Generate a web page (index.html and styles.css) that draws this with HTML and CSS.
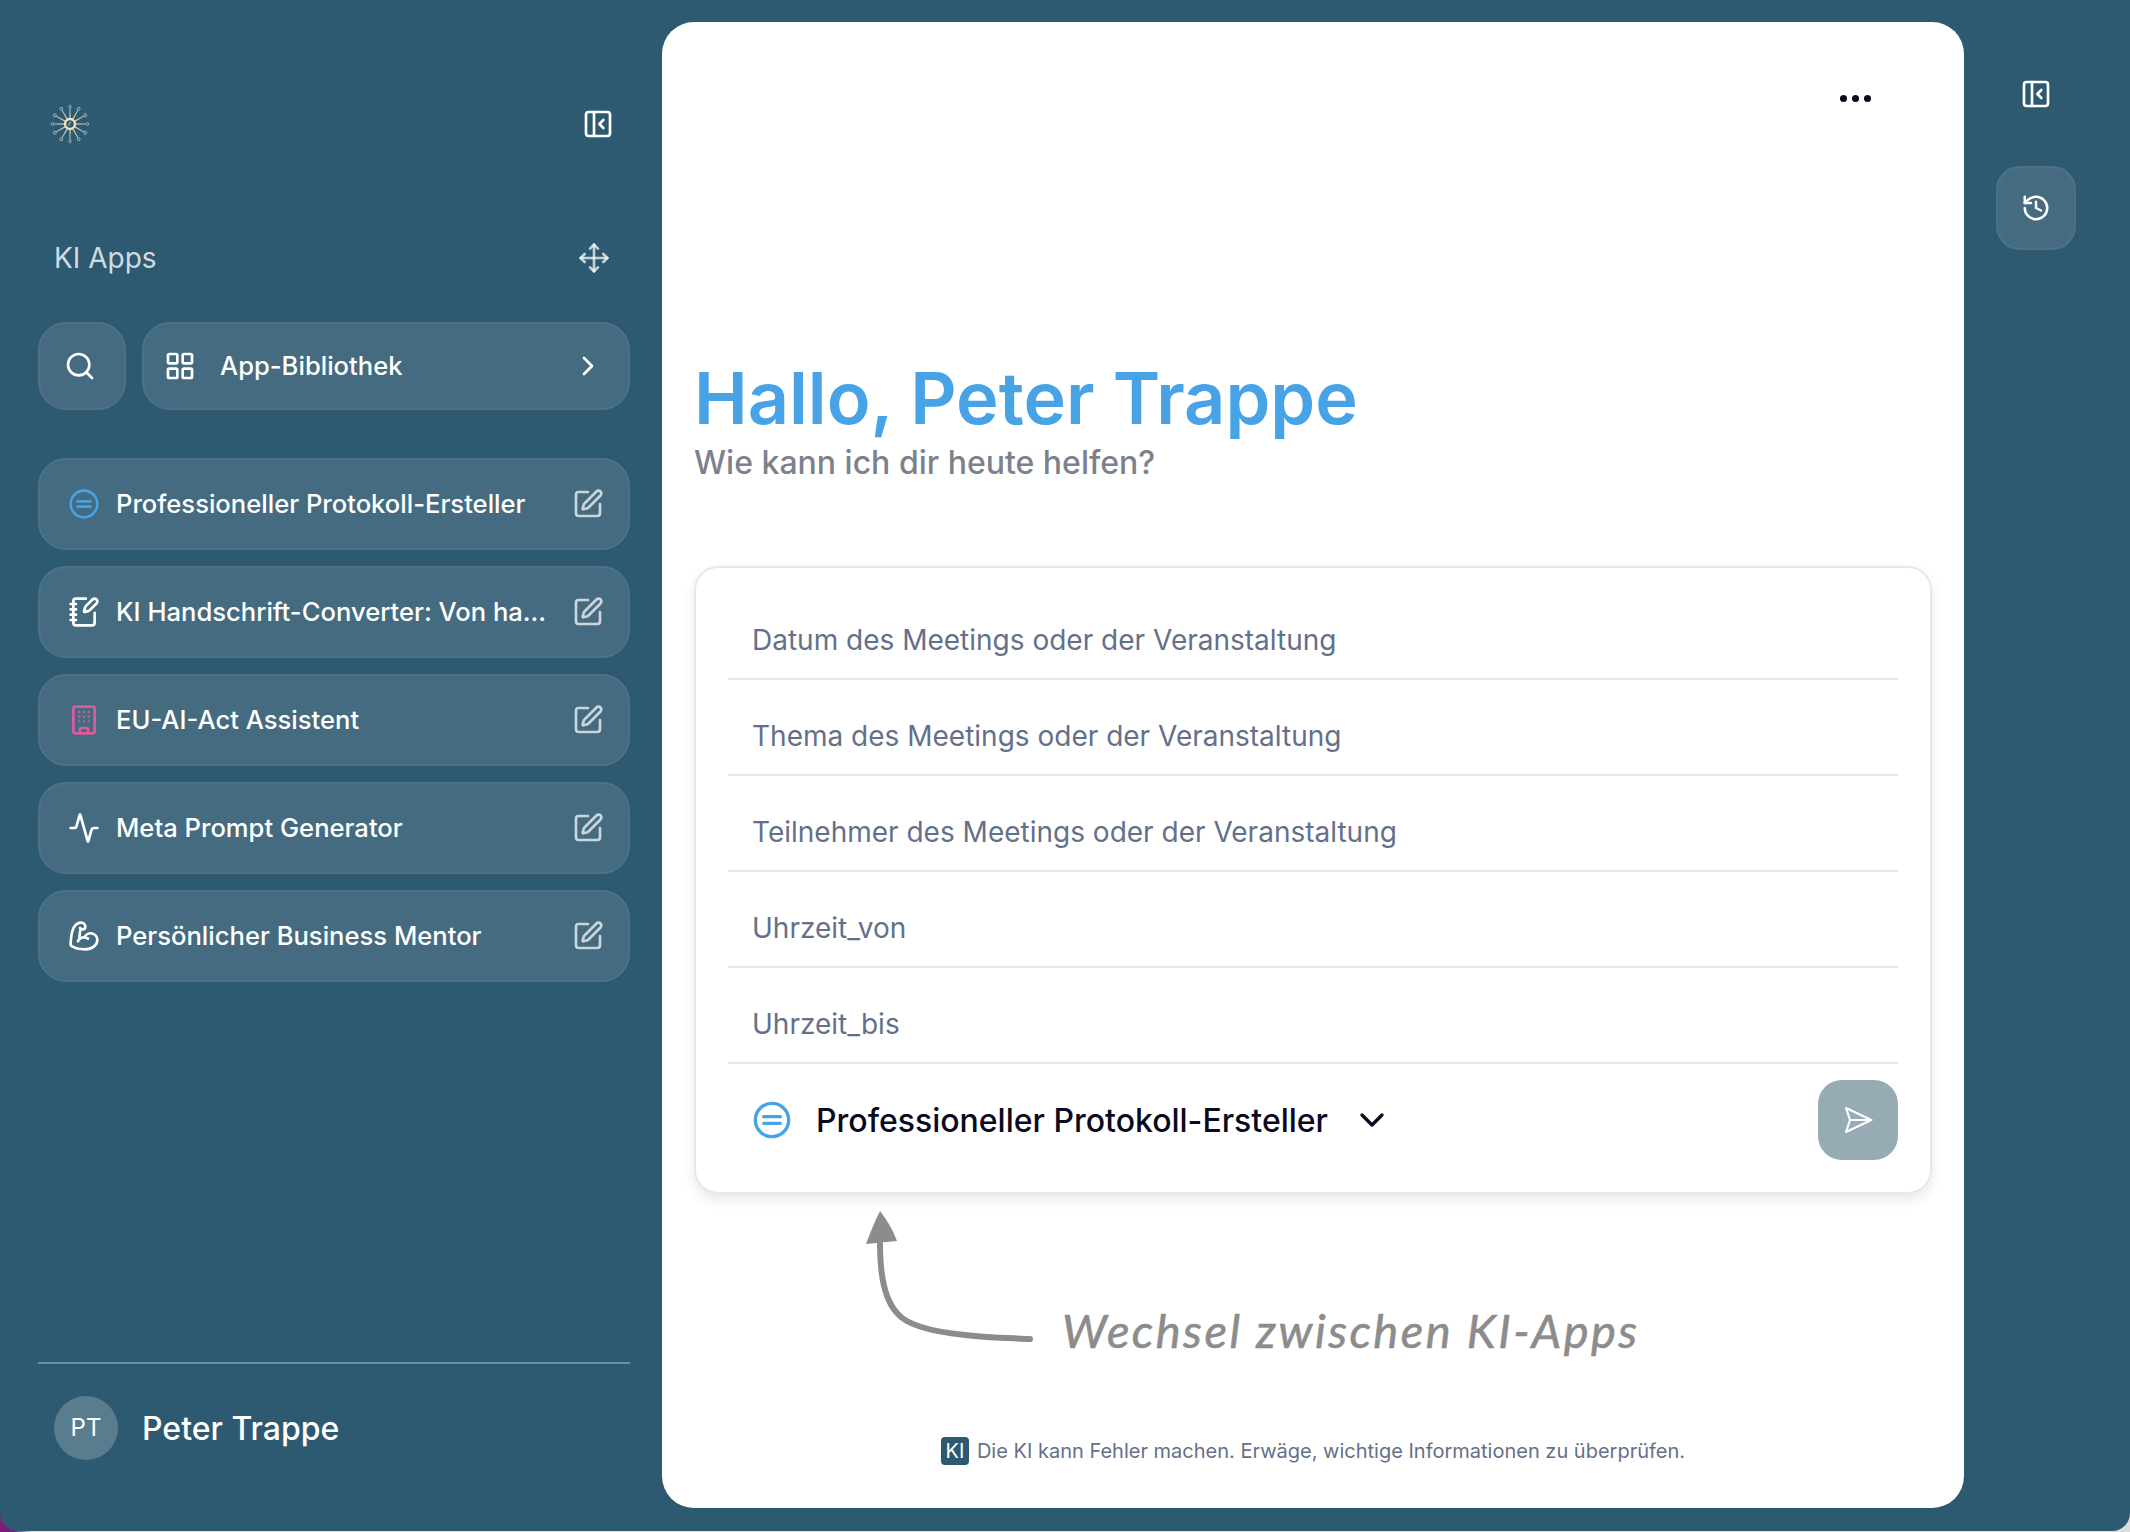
FILE: index.html
```html
<!DOCTYPE html>
<html lang="de">
<head>
<meta charset="utf-8">
<title>KI Apps</title>
<link rel="stylesheet" href="styles.css">
</head>
<body>
<svg class="defs" width="0" height="0" aria-hidden="true">
  <defs>
    <symbol id="i-pen" viewBox="0 0 24 24"><path d="M12 3H5a2 2 0 0 0-2 2v14a2 2 0 0 0 2 2h14a2 2 0 0 0 2-2v-7"/><path d="M18.375 2.625a1 1 0 0 1 3 3l-9.013 9.014a2 2 0 0 1-.853.505l-2.873.84a.5.5 0 0 1-.62-.62l.84-2.873a2 2 0 0 1 .506-.852z"/></symbol>
    <symbol id="i-panel" viewBox="0 0 24 24"><rect x="3" y="3" width="18" height="18" rx="2"/><path d="M9 3v18"/><path d="m16 15-3-3 3-3"/></symbol>
    <symbol id="i-equal" viewBox="0 0 24 24"><circle cx="12" cy="12" r="10"/><path d="M7 10h10"/><path d="M7 14h10"/></symbol>
    <linearGradient id="spoke-fade" gradientUnits="userSpaceOnUse" x1="24" y1="18" x2="24" y2="5"><stop offset="0" stop-color="#f3e3bd"/><stop offset="1" stop-color="#86a0ac"/></linearGradient>
    <g id="spoke"><path d="M24 18V6.500" stroke="url(#spoke-fade)" stroke-width="1.200" fill="none"/><circle cx="24" cy="5" r="1.500" fill="none" stroke="#9fb3bc" stroke-width="1"/></g>
  </defs>
</svg>
<div class="app">
  <aside class="sidebar">
    <div class="side-head">
      <svg class="logo" viewBox="0 0 48 48">
        <use href="#spoke"/>
        <use href="#spoke" transform="rotate(30 24 24)"/>
        <use href="#spoke" transform="rotate(60 24 24)"/>
        <use href="#spoke" transform="rotate(90 24 24)"/>
        <use href="#spoke" transform="rotate(120 24 24)"/>
        <use href="#spoke" transform="rotate(150 24 24)"/>
        <use href="#spoke" transform="rotate(180 24 24)"/>
        <use href="#spoke" transform="rotate(210 24 24)"/>
        <use href="#spoke" transform="rotate(240 24 24)"/>
        <use href="#spoke" transform="rotate(270 24 24)"/>
        <use href="#spoke" transform="rotate(300 24 24)"/>
        <use href="#spoke" transform="rotate(330 24 24)"/>
        <circle cx="24" cy="24" r="5.400" fill="#2d5a71" stroke="#f3e3bd" stroke-width="2.600"/>
        <path d="M23 25.500a2.600 2.600 0 0 1 2-3.600" fill="none" stroke="#f3e3bd" stroke-width="1"/>
      </svg>
      <svg class="icon collapse"><use href="#i-panel"/></svg>
    </div>
    <div class="section-title">
      <span>KI Apps</span>
      <svg class="icon dim" viewBox="0 0 24 24"><path d="M12 2v20"/><path d="m15 19-3 3-3-3"/><path d="m19 9 3 3-3 3"/><path d="M2 12h20"/><path d="m5 9-3 3 3 3"/><path d="m9 5 3-3 3 3"/></svg>
    </div>
    <div class="tools">
      <button class="tile search-btn" type="button">
        <svg class="icon" viewBox="0 0 24 24"><circle cx="11" cy="11" r="8"/><path d="m21 21-4.300-4.300"/></svg>
      </button>
      <button class="tile library-btn" type="button">
        <svg class="icon" viewBox="0 0 24 24"><rect x="3" y="3" width="7" height="7" rx="1"/><rect x="14" y="3" width="7" height="7" rx="1"/><rect x="14" y="14" width="7" height="7" rx="1"/><rect x="3" y="14" width="7" height="7" rx="1"/></svg>
        <span class="library-label">App-Bibliothek</span>
        <svg class="icon" viewBox="0 0 24 24"><path d="m9 18 6-6-6-6"/></svg>
      </button>
    </div>
    <nav class="app-list">
      <a class="tile app-row">
        <svg class="icon blue"><use href="#i-equal"/></svg>
        <span class="app-name">Professioneller Protokoll-Ersteller</span>
        <svg class="icon dim"><use href="#i-pen"/></svg>
      </a>
      <a class="tile app-row">
        <svg class="icon" viewBox="0 0 24 24"><path d="M13.400 2H6a2 2 0 0 0-2 2v16a2 2 0 0 0 2 2h12a2 2 0 0 0 2-2v-7.400"/><path d="M2 6h4"/><path d="M2 10h4"/><path d="M2 14h4"/><path d="M2 18h4"/><path d="M21.378 5.626a1 1 0 1 0-3.004-3.004l-5.010 5.012a2 2 0 0 0-.506.854l-.837 2.870a.5.5 0 0 0 .62.62l2.870-.837a2 2 0 0 0 .854-.506z"/></svg>
        <span class="app-name">KI Handschrift-Converter: Von ha...</span>
        <svg class="icon dim"><use href="#i-pen"/></svg>
      </a>
      <a class="tile app-row">
        <svg class="icon pink" viewBox="0 0 24 24"><rect x="4" y="2" width="16" height="20" rx="1.500"/><path d="M9 22v-3a1 1 0 0 1 1-1h4a1 1 0 0 1 1 1v3"/><path class="dots" d="M8.500 6h.01M12 6h.01M15.500 6h.01M8.500 9.500h.01M12 9.500h.01M15.500 9.500h.01M8.500 13h.01M12 13h.01M15.500 13h.01"/></svg>
        <span class="app-name">EU-AI-Act Assistent</span>
        <svg class="icon dim"><use href="#i-pen"/></svg>
      </a>
      <a class="tile app-row">
        <svg class="icon" viewBox="0 0 24 24"><path d="M22 12h-2.480a2 2 0 0 0-1.930 1.460l-2.350 8.360a.25.25 0 0 1-.480 0L9.240 2.180a.25.25 0 0 0-.480 0l-2.350 8.360A2 2 0 0 1 4.490 12H2"/></svg>
        <span class="app-name">Meta Prompt Generator</span>
        <svg class="icon dim"><use href="#i-pen"/></svg>
      </a>
      <a class="tile app-row">
        <svg class="icon" viewBox="0 0 24 24"><path d="M12.409 13.017A5 5 0 0 1 22 15c0 3.866-4 7-9 7-4.077 0-8.153-.82-10.371-2.462-.426-.316-.631-.832-.62-1.362C2.118 12.723 2.627 2 10 2a3 3 0 0 1 3 3 2 2 0 0 1-2 2c-1.105 0-1.640-.444-2-1"/><path d="M15 14a5 5 0 0 0-7.584 2"/><path d="M9.964 6.825C8.019 7.977 9.500 13 8 15"/></svg>
        <span class="app-name">Persönlicher Business Mentor</span>
        <svg class="icon dim"><use href="#i-pen"/></svg>
      </a>
    </nav>
    <div class="user">
      <span class="avatar">PT</span>
      <span class="user-name">Peter Trappe</span>
    </div>
  </aside>

  <main class="main">
    <div class="topbar"><span class="more"><i></i><i></i><i></i></span></div>
    <header class="greeting">
      <h1>Hallo, Peter Trappe</h1>
      <p>Wie kann ich dir heute helfen?</p>
    </header>
    <form class="form-card">
      <div class="field">Datum des Meetings oder der Veranstaltung</div>
      <div class="field">Thema des Meetings oder der Veranstaltung</div>
      <div class="field">Teilnehmer des Meetings oder der Veranstaltung</div>
      <div class="field">Uhrzeit_von</div>
      <div class="field">Uhrzeit_bis</div>
      <div class="form-foot">
        <svg class="icon blue sel-icon"><use href="#i-equal"/></svg>
        <span class="sel-name">Professioneller Protokoll-Ersteller</span>
        <svg class="icon chevron" viewBox="0 0 24 24"><path d="m6 9 6 6 6-6"/></svg>
        <span class="send"><svg class="icon send-icon" viewBox="0 0 24 24"><path d="m3 3 3 9-3 9 19-9Z"/><path d="M6 12h16"/></svg></span>
      </div>
    </form>
    <svg class="note-arrow" viewBox="0 0 200 150">
      <path class="shaft" d="M15 34C15 60 18 88 32 103C42 116 70 122 100 125C125 128 145 128 165 129"/>
      <path class="head" d="M15 1Q26 15 32 31L1 34Q8 15 15 1Z"/>
    </svg>
    <span class="note-text">Wechsel zwischen KI-Apps</span>
    <footer class="disclaimer">
      <span class="badge">KI</span>
      <span>Die KI kann Fehler machen. Erwäge, wichtige Informationen zu überprüfen.</span>
    </footer>
  </main>

  <aside class="rail">
    <svg class="icon collapse"><use href="#i-panel"/></svg>
    <button class="tile history" type="button">
      <svg class="icon" viewBox="0 0 24 24"><path d="M3 12a9 9 0 1 0 9-9 9.750 9.750 0 0 0-6.740 2.740L3 8"/><path d="M3 3v5h5"/><path d="M12 7v5l4 2"/></svg>
    </button>
  </aside>
</div>
</body>
</html>
```
FILE: styles.css
```css
* { box-sizing: border-box; }
html, body { margin: 0; height: 100%; }
body {
  background: linear-gradient(90deg, #7a1d7d 0, #7a1d7d 14px, #dcdcdc 32px);
  font-family: Inter, "Liberation Sans", sans-serif;
  overflow: hidden;
}
.defs { position: absolute; }
.app {
  display: flex;
  height: 1531px;
  background: #2d5a71;
  border-radius: 0 0 18px 18px;
}
.icon {
  width: 32px;
  height: 32px;
  flex: none;
  fill: none;
  stroke: #fff;
  stroke-width: 2;
  stroke-linecap: round;
  stroke-linejoin: round;
}
.icon.dim { stroke: rgba(255, 255, 255, .72); }
.icon.blue { stroke: #46a3e6; }
.icon.pink { stroke: #dd5a9c; }
.icon.pink .dots { stroke-width: 1.7; }
.tile {
  background: #446b80;
  border: 2px solid #4d7287;
  color: #fff;
  font: inherit;
  padding: 0;
}

.sidebar {
  width: 662px;
  flex: none;
  display: flex;
  flex-direction: column;
  padding: 92px 32px 71px 38px;
}
.side-head {
  height: 64px;
  display: flex;
  align-items: center;
  justify-content: space-between;
  padding: 0 16px 0 10px;
}
.logo { width: 44px; height: 44px; }
.section-title {
  height: 64px;
  margin-top: 70px;
  display: flex;
  align-items: center;
  justify-content: space-between;
  padding: 0 20px 0 16px;
  color: rgba(255, 255, 255, .8);
  font-size: 28px;
}
.tools { display: flex; gap: 16px; margin-top: 32px; }
.search-btn {
  width: 88px;
  height: 88px;
  border-radius: 28px;
  display: flex;
  align-items: center;
  justify-content: center;
}
.search-btn .icon { margin-right: 4px; }
.library-btn {
  flex: 1;
  height: 88px;
  border-radius: 28px;
  display: flex;
  align-items: center;
  padding: 0 24px 0 20px;
}
.library-label {
  flex: 1;
  margin-left: 24px;
  padding-bottom: 2px;
  text-align: left;
  font-size: 25.6px;
  font-weight: 500;
}
.app-list {
  display: flex;
  flex-direction: column;
  gap: 16px;
  margin-top: 48px;
}
.app-row {
  height: 92px;
  border-radius: 28px;
  display: flex;
  align-items: center;
  padding: 0 24px 0 28px;
}
.app-name {
  flex: 1;
  margin-left: 16px;
  padding-bottom: 2px;
  font-size: 25.6px;
  font-weight: 500;
  white-space: nowrap;
}
.user {
  margin-top: auto;
  border-top: 2px solid rgba(255, 255, 255, .32);
  padding: 32px 16px 0;
  display: flex;
  align-items: center;
  gap: 24px;
}
.avatar {
  width: 64px;
  height: 64px;
  border-radius: 50%;
  background: #597c8e;
  color: #fff;
  font-size: 24px;
  padding-bottom: 2px;
  display: flex;
  align-items: center;
  justify-content: center;
}
.user-name { color: #fff; font-size: 32px; font-weight: 500; }

.main {
  width: 1302px;
  flex: none;
  position: relative;
  margin: 22px 0 23px;
  padding: 0 32px;
  background: #fff;
  border-radius: 32px;
  display: flex;
  flex-direction: column;
}
.topbar {
  height: 152px;
  display: flex;
  align-items: center;
  justify-content: flex-end;
  padding-right: 61px;
}
.more { display: flex; gap: 5px; }
.more i { width: 7px; height: 7px; border-radius: 50%; background: #0a0a1e; }
.greeting { margin-top: 184px; }
.greeting h1 {
  margin: 0;
  color: #48a3e6;
  font-size: 72px;
  line-height: 80px;
  font-weight: 600;
}
.greeting p {
  margin: 5px 0 0;
  color: #7c818b;
  font-size: 32px;
  line-height: 40px;
  font-weight: 500;
}
.form-card {
  margin-top: 83px;
  height: 628px;
  padding: 16px 32px 0;
  border: 2px solid #e2e8f0;
  border-radius: 24px;
  box-shadow: 0 6px 12px rgba(30, 40, 60, .1);
}
.field {
  height: 96px;
  display: flex;
  align-items: center;
  padding: 18px 24px 0;
  border-bottom: 2px solid #e2e8f0;
  color: #64708a;
  font-size: 28px;
}
.form-foot {
  display: flex;
  align-items: center;
  padding: 16px 0 0 24px;
}
.sel-icon { width: 40px; height: 40px; }
.sel-name {
  margin-left: 24px;
  color: #0a0a1e;
  font-size: 32px;
  font-weight: 500;
}
.chevron { margin-left: 24px; width: 40px; height: 40px; stroke: #0a0a1e; }
.send {
  margin-left: auto;
  width: 80px;
  height: 80px;
  border-radius: 24px;
  background: #97abb5;
  display: flex;
  align-items: center;
  justify-content: center;
}
.send-icon { stroke-width: 1.6; }
.note-arrow {
  position: absolute;
  left: 203px;
  top: 1188px;
  width: 200px;
  height: 150px;
  fill: none;
}
.note-arrow .shaft { stroke: #8c8c8c; stroke-width: 6; stroke-linecap: round; }
.note-arrow .head { fill: #8c8c8c; }
.note-text {
  position: absolute;
  left: 400px;
  top: 1280px;
  color: #8c8c8c;
  font-family: Lato, sans-serif;
  font-style: italic;
  font-size: 47px;
  line-height: 56px;
  letter-spacing: 2.5px;
  -webkit-text-stroke: .6px #8c8c8c;
  white-space: nowrap;
}
.disclaimer {
  margin-top: auto;
  padding-bottom: 43px;
  display: flex;
  align-items: center;
  justify-content: center;
  gap: 8px;
  color: #64708a;
  font-size: 20px;
}
.badge {
  width: 28px;
  height: 28px;
  border-radius: 4px;
  background: #2d5a71;
  color: #fff;
  display: flex;
  align-items: center;
  justify-content: center;
}

.rail {
  flex: 1;
  display: flex;
  flex-direction: column;
  align-items: center;
  padding: 78px 22px 0 0;
}
.history {
  width: 80px;
  height: 84px;
  margin-top: 56px;
  border-radius: 24px;
  display: flex;
  align-items: center;
  justify-content: center;
}
.history .icon { width: 30px; height: 30px; }
```
